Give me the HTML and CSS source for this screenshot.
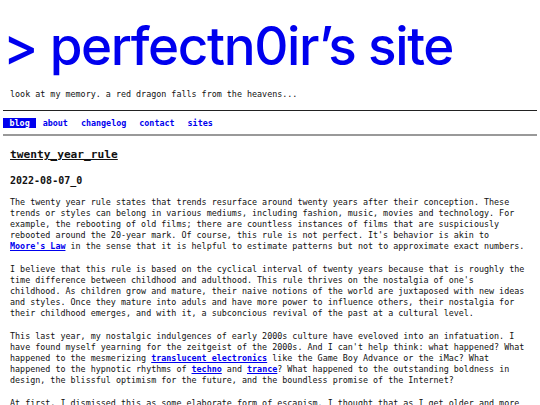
FILE: index.html
```html
<!DOCTYPE html>
<html>
<head>
<meta charset="utf-8">
<link rel="stylesheet" href="styles.css">
</head>
<body>
<div class="page">
  <header class="masthead">
    <h1 class="site-title">&gt; perfectn0ir’s site</h1>
    <p class="tagline">look at my memory. a red dragon falls from the heavens...</p>
  </header>
  <nav class="nav">
    <a class="nav-item active" href="#">blog</a>
    <a class="nav-item" href="#">about</a>
    <a class="nav-item" href="#">changelog</a>
    <a class="nav-item" href="#">contact</a>
    <a class="nav-item" href="#">sites</a>
  </nav>
  <main class="post">
    <h2 class="post-title">twenty_year_rule</h2>
    <h3 class="post-date">2022-08-07_0</h3>
    <p>The twenty year rule states that trends resurface around twenty years after their conception. These trends or styles can belong in various mediums, including fashion, music, movies and technology. For example, the rebooting of old films; there are countless instances of films that are suspiciously rebooted around the 20-year mark. Of course, this rule is not perfect. It's behavior is akin to <a href="#" class="bold-link">Moore's Law</a> in the sense that it is helpful to estimate patterns but not to approximate exact numbers.</p>
    <p>I believe that this rule is based on the cyclical interval of twenty years because that is roughly the time difference between childhood and adulthood. This rule thrives on the nostalgia of one's childhood. As children grow and mature, their naive notions of the world are juxtaposed with new ideas and styles. Once they mature into aduls and have more power to influence others, their nostalgia for their childhood emerges, and with it, a subconcious revival of the past at a cultural level.</p>
    <p>This last year, my nostalgic indulgences of early 2000s culture have eveloved into an infatuation. I have found myself yearning for the zeitgeist of the 2000s. And I can't help think: what happened? What happened to the mesmerizing <a href="#" class="bold-link">translucent electronics</a> like the Game Boy Advance or the iMac? What happened to the hypnotic rhythms of <a href="#" class="bold-link">techno</a> and <a href="#" class="bold-link">trance</a>? What happened to the outstanding boldness in design, the blissful optimism for the future, and the boundless promise of the Internet?</p>
    <p>At first, I dismissed this as some elaborate form of escapism. I thought that as I get older and more</p>
  </main>
</div>
</body>
</html>
```
FILE: styles.css
```css
html, body {
  margin: 0;
  padding: 0;
  background: #ffffff;
}
.page {
  padding: 0 3px;
  font-family: "DejaVu Sans Mono", monospace;
  font-size: 8.4px;
  line-height: 11px;
  color: #111111;
}
.masthead {
  padding: 0 7px;
}
.site-title {
  margin: 0 0 0 -7px;
  padding-top: 18px;
  font-family: Inter, "Noto Sans", sans-serif;
  font-weight: 500;
  font-size: 53px;
  line-height: 56px;
  color: #0000ee;
  letter-spacing: -1.4px;
}
.tagline {
  margin: 15px 0 10px;
}
.nav {
  display: flex;
  border-top: 1px solid #222222;
  border-bottom: 2px solid #999999;
  padding: 7px 0 6px;
}
.nav-item {
  display: block;
  padding: 0 6.5px;
  font-weight: bold;
  color: #0000ee;
  text-decoration: none;
  line-height: 10px;
}
.nav-item.active {
  background: #0000ee;
  color: #ffffff;
}
.post {
  padding: 0 7px;
}
.post-title {
  margin: 11px 0 0;
  font-size: 11.2px;
  line-height: 16px;
  text-decoration: underline;
}
.post-date {
  margin: 11px 0 0;
  font-size: 10px;
  line-height: 14px;
}
.post p {
  margin: 12px 0 0;
  max-width: 518px;
}
.post .post-date + p {
  margin-top: 9px;
}
.bold-link {
  color: #0000ee;
  font-weight: bold;
}
```
